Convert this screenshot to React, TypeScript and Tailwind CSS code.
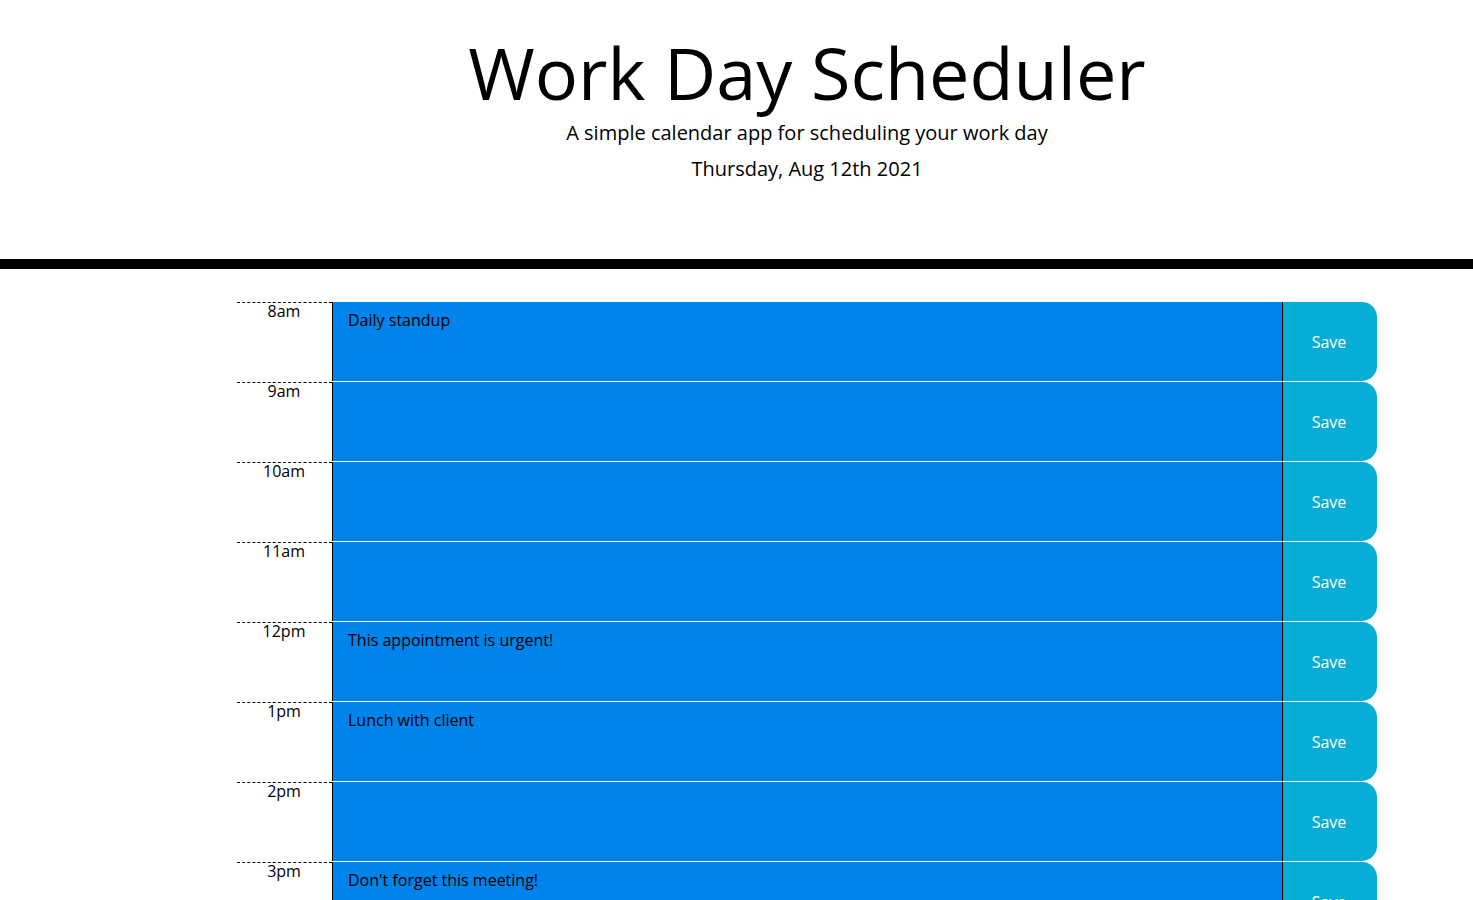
const hours = [
  { label: '8am', text: 'Daily standup' },
  { label: '9am', text: '' },
  { label: '10am', text: '' },
  { label: '11am', text: '' },
  { label: '12pm', text: 'This appointment is urgent!' },
  { label: '1pm', text: 'Lunch with client' },
  { label: '2pm', text: '' },
  { label: '3pm', text: "Don't forget this meeting!" },
  { label: '4pm', text: '' },
  { label: '5pm', text: '' },
];

function TimeBlock({ label, text }: { label: string; text: string }) {
  return (
    <div className="flex h-[80px] border-t border-white">
      <div className="w-[95px] border-t border-dashed border-black pr-px text-center text-base leading-4 text-black">
        {label}
      </div>
      <textarea
        defaultValue={text}
        className="flex-1 resize-none border-l border-black bg-[#0083eb] pl-[15px] pt-[10px] text-base leading-4 text-black outline-none"
      />
      <button className="w-[95px] rounded-r-[15px] border-l border-black bg-[#06aed5] pr-[2px] text-base text-white">
        Save
      </button>
    </div>
  );
}

export default function App() {
  return (
    <div className="overflow-x-hidden bg-white font-['Open_Sans',sans-serif]">
      <div className="w-[1614px]">
        <header className="border-b-[10px] border-black pb-[75px] pt-[29px] text-center">
          <h1 className="text-[72px] font-normal leading-[86px] text-black">Work Day Scheduler</h1>
          <p className="mt-[3px] text-[20px] font-normal leading-[30px] text-black">
            A simple calendar app for scheduling your work day
          </p>
          <p className="mt-[6px] text-[20px] font-normal leading-[30px] text-black">Thursday, Aug 12th 2021</p>
        </header>
        <div className="mx-auto mt-[32px] w-[1140px]">
          {hours.map((h) => (
            <TimeBlock key={h.label} label={h.label} text={h.text} />
          ))}
        </div>
      </div>
    </div>
  );
}
